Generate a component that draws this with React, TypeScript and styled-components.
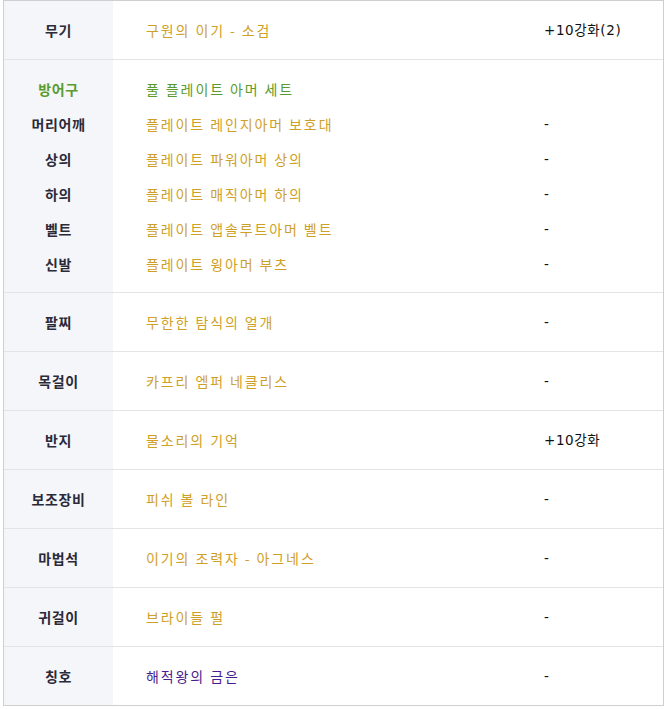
import React from "react";
import styled, { createGlobalStyle } from "styled-components";

const Global = createGlobalStyle`
  html, body { margin: 0; padding: 0; background: #ffffff; }
  body { font-family: "Noto Sans CJK KR", "Noto Sans", sans-serif; }
`;

const Page = styled.div`
  padding: 0 8px 0 3px;
`;

const Table = styled.div`
  width: 659px;
  border: 1px solid #cfcfcf;
  background: #ffffff;
`;

const Row = styled.div`
  display: grid;
  grid-template-columns: 109px 1fr 119px;
  & + & {
    border-top: 1px solid #e4e4e4;
  }
`;

const LabelCell = styled.div<{ $pb: number }>`
  background: #f5f6fa;
  padding: 12px 0 ${(p) => p.$pb}px;
  text-align: center;
`;

const ItemCell = styled.div<{ $pb: number }>`
  padding: 12px 0 ${(p) => p.$pb}px 33px;
`;

const EnhanceCell = styled.div<{ $pb: number }>`
  padding: 12px 0 ${(p) => p.$pb}px;
`;

const Line = styled.div<{ $color?: string; $bold?: boolean }>`
  height: 35px;
  line-height: 35px;
  font-size: 14px;
  white-space: nowrap;
  color: ${(p) => p.$color || "#222222"};
  font-weight: ${(p) => (p.$bold ? 700 : 400)};
  letter-spacing: ${(p) => (p.$bold ? "0.6px" : "1.9px")};
`;

const EnhanceLine = styled(Line)`
  font-family: "DejaVu Sans", "Noto Sans CJK KR", sans-serif;
  font-size: 13.5px;
  letter-spacing: 0.6px;
  color: #111111;
`;

const GOLD = "#cfa028";
const GREEN = "#5a9b2e";
const PURPLE = "#4a1d8e";
const LABEL = "#2a2a38";

type Entry = { label: string; labelColor?: string; item: string; itemColor: string; enh: string };

const groups: Entry[][] = [
  [{ label: "무기", item: "구원의 이기 - 소검", itemColor: GOLD, enh: "+10강화(2)" }],
  [
    { label: "방어구", labelColor: GREEN, item: "풀 플레이트 아머 세트", itemColor: GREEN, enh: "" },
    { label: "머리어깨", item: "플레이트 레인지아머 보호대", itemColor: GOLD, enh: "-" },
    { label: "상의", item: "플레이트 파워아머 상의", itemColor: GOLD, enh: "-" },
    { label: "하의", item: "플레이트 매직아머 하의", itemColor: GOLD, enh: "-" },
    { label: "벨트", item: "플레이트 앱솔루트아머 벨트", itemColor: GOLD, enh: "-" },
    { label: "신발", item: "플레이트 윙아머 부츠", itemColor: GOLD, enh: "-" },
  ],
  [{ label: "팔찌", item: "무한한 탐식의 얼개", itemColor: GOLD, enh: "-" }],
  [{ label: "목걸이", item: "카프리 엠퍼 네클리스", itemColor: GOLD, enh: "-" }],
  [{ label: "반지", item: "물소리의 기억", itemColor: GOLD, enh: "+10강화" }],
  [{ label: "보조장비", item: "피쉬 볼 라인", itemColor: GOLD, enh: "-" }],
  [{ label: "마법석", item: "이기의 조력자 - 아그네스", itemColor: GOLD, enh: "-" }],
  [{ label: "귀걸이", item: "브라이들 펄", itemColor: GOLD, enh: "-" }],
  [{ label: "칭호", item: "해적왕의 금은", itemColor: PURPLE, enh: "-" }],
];

export default function App() {
  return (
    <>
      <Global />
      <Page>
        <Table>
          {groups.map((g, i) => {
            const pb = g.length > 1 ? 10 : 11;
            return (
              <Row key={i}>
                <LabelCell $pb={pb}>
                  {g.map((e, j) => (
                    <Line key={j} $bold $color={e.labelColor || LABEL}>
                      {e.label}
                    </Line>
                  ))}
                </LabelCell>
                <ItemCell $pb={pb}>
                  {g.map((e, j) => (
                    <Line key={j} $color={e.itemColor}>
                      {e.item}
                    </Line>
                  ))}
                </ItemCell>
                <EnhanceCell $pb={pb}>
                  {g.map((e, j) => (
                    <EnhanceLine key={j}>{e.enh}</EnhanceLine>
                  ))}
                </EnhanceCell>
              </Row>
            );
          })}
        </Table>
      </Page>
    </>
  );
}
